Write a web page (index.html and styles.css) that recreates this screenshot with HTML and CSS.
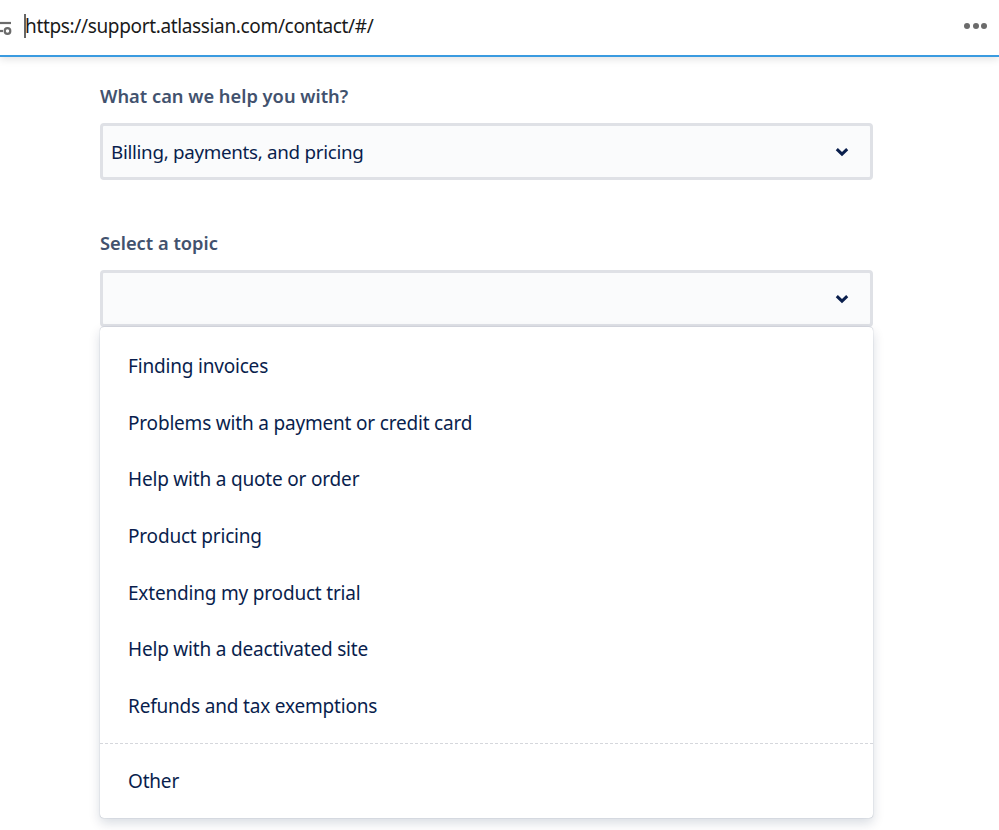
FILE: index.html
```html
<!DOCTYPE html>
<html lang="en">
<head>
    <meta charset="UTF-8">
    <meta name="viewport" content="width=device-width, initial-scale=1.0">
    <title>Contact support</title>
    <link rel="stylesheet" href="styles.css">
</head>
<body>
    <div class="address-bar">
        <svg class="site-icon" width="12" height="18" viewBox="0 0 12 18">
            <path d="M-4 4H11" stroke="#6b6b6b" stroke-width="2.2"/>
            <circle cx="7.5" cy="12" r="2.8" fill="none" stroke="#6b6b6b" stroke-width="2.2"/>
            <path d="M-4 12H3" stroke="#6b6b6b" stroke-width="2.2"/>
        </svg>
        <span class="caret"></span>
        <span class="url">https://support.atlassian.com/contact/#/</span>
        <span class="dots"><i></i><i></i><i></i></span>
    </div>

    <div class="form">
        <div class="label">What can we help you with?</div>
        <div class="select">
            <span>Billing, payments, and pricing</span>
            <svg class="chevron" width="14" height="10" viewBox="0 0 14 10"><path d="M1.8 2.2L7 7.2l5.2-5" fill="none" stroke="#0a1f4d" stroke-width="3"/></svg>
        </div>

        <div class="label label-topic">Select a topic</div>
        <div class="select">
            <span></span>
            <svg class="chevron" width="14" height="10" viewBox="0 0 14 10"><path d="M1.8 2.2L7 7.2l5.2-5" fill="none" stroke="#0a1f4d" stroke-width="3"/></svg>
        </div>

        <ul class="menu">
            <li>Finding invoices</li>
            <li>Problems with a payment or credit card</li>
            <li>Help with a quote or order</li>
            <li>Product pricing</li>
            <li>Extending my product trial</li>
            <li>Help with a deactivated site</li>
            <li>Refunds and tax exemptions</li>
            <li class="other">Other</li>
        </ul>
    </div>
</body>
</html>
```

FILE: styles.css
```css
html, body {
    margin: 0;
    padding: 0;
    height: 830px;
    overflow: hidden;
    background-color: #ffffff;
}
body {
    font-family: "Noto Sans", "Open Sans", sans-serif;
    color: #091e4d;
}
.address-bar {
    height: 57px;
    box-sizing: border-box;
    border-bottom: 2px solid #3a9be0;
    display: flex;
    align-items: center;
    padding-bottom: 4px;
    box-shadow: 0 2px 8px rgba(0, 0, 0, 0.12);
}
.site-icon {
    flex: none;
    margin-top: 4px;
    overflow: visible;
}
.caret {
    width: 2px;
    height: 24px;
    background-color: #666;
    margin-left: 12px;
    flex: none;
}
.url {
    font-size: 19px;
    letter-spacing: -0.35px;
    color: #1a1a1a;
    margin-left: -1px;
}
.dots {
    margin-left: auto;
    margin-right: 12px;
    display: flex;
    gap: 2.5px;
}
.dots i {
    width: 6px;
    height: 6px;
    border-radius: 50%;
    background-color: #6b6b6b;
}
.form {
    width: 773px;
    margin-left: 100px;
}
.label {
    font-size: 18.3px;
    font-weight: 600;
    color: #42526e;
    line-height: 24px;
    margin-top: 27px;
    margin-bottom: 15px;
}
.label-topic {
    margin-top: 51px;
}
.select {
    height: 57px;
    box-sizing: border-box;
    border: 3px solid #dfe1e6;
    border-radius: 4px;
    background-color: #fafbfc;
    display: flex;
    align-items: center;
    justify-content: space-between;
    padding: 0 21px 0 8px;
    font-size: 18.8px;
    letter-spacing: -0.3px;
}
.menu {
    list-style: none;
    margin: 0;
    padding: 11px 0 0;
    background-color: #ffffff;
    border-radius: 4px;
    box-shadow: 0 5px 12px rgba(9, 30, 66, 0.16), 0 0 1px rgba(9, 30, 66, 0.45);
}
.menu li {
    height: 56.7px;
    line-height: 56.7px;
    padding-left: 28px;
    font-size: 19px;
    letter-spacing: -0.19px;
}
.menu .other {
    border-top: 1px dashed #d5d7dc;
    height: 74px;
    line-height: 74px;
    margin-top: 8px;
}
```
